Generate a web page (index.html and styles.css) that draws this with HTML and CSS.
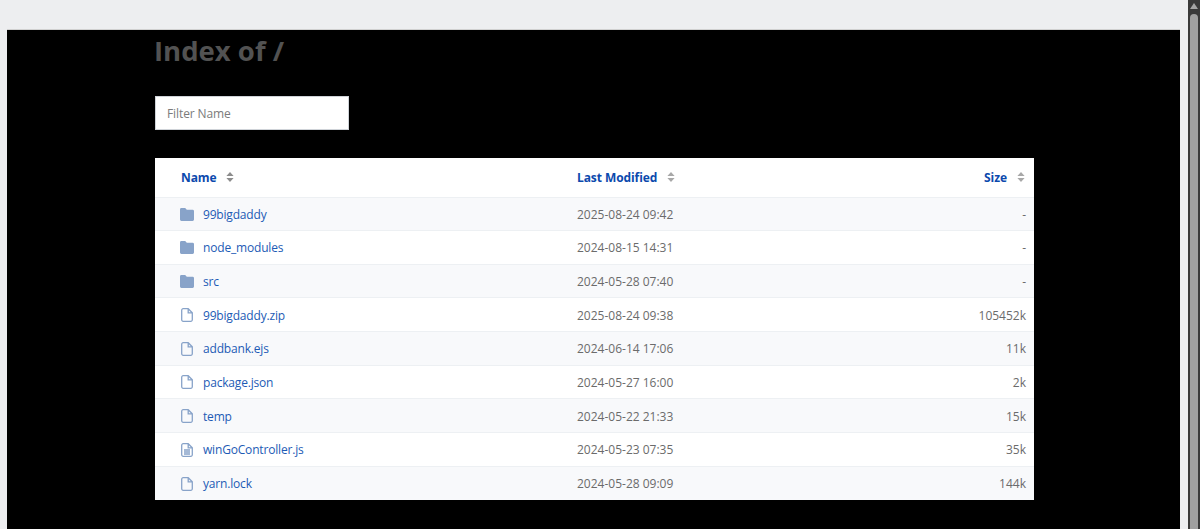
FILE: index.html
```html
<!DOCTYPE html>
<html lang="en">
<head>
<meta charset="utf-8">
<title>Index of /</title>
<link rel="stylesheet" href="styles.css">
</head>
<body>
<svg class="defs" width="0" height="0" aria-hidden="true">
  <symbol id="folder" viewBox="0 0 14 13"><path d="M1.4 0H5.2L6.8 1.8H12.6A1.4 1.4 0 0 1 14 3.2V11.6A1.4 1.4 0 0 1 12.6 13H1.4A1.4 1.4 0 0 1 0 11.6V1.4A1.4 1.4 0 0 1 1.4 0Z"/></symbol>
  <symbol id="file" viewBox="0 0 12 14"><path d="M2.2.7H7.2L11.3 4.8V11.8A1.5 1.5 0 0 1 9.8 13.3H2.2A1.5 1.5 0 0 1 .7 11.8V2.2A1.5 1.5 0 0 1 2.2.7ZM7.2.7V4.8H11.3"/></symbol>
  <symbol id="code" viewBox="0 0 12 14"><path d="M2.2.7H7.2L11.3 4.8V11.8A1.5 1.5 0 0 1 9.8 13.3H2.2A1.5 1.5 0 0 1 .7 11.8V2.2A1.5 1.5 0 0 1 2.2.7ZM7.2.7V4.8H11.3M3 7H9M3 9H9M3 11H9"/></symbol>
  <symbol id="sort" viewBox="0 0 8 10"><path d="M4 0L7.6 4H.4ZM4 10L.4 6H7.6Z"/></symbol>
</svg>
<div class="shell">
  <main class="viewport">
    <div class="content">
      <h1 class="title">Index of /</h1>
      <input class="filter" type="text" placeholder="Filter Name">
      <table class="listing">
        <thead>
          <tr>
            <th class="col-name"><span class="head">Name<svg class="sort"><use href="#sort"/></svg></span></th>
            <th class="col-date"><span class="head">Last Modified<svg class="sort"><use href="#sort"/></svg></span></th>
            <th class="col-size"><span class="head">Size<svg class="sort"><use href="#sort"/></svg></span></th>
          </tr>
        </thead>
        <tbody>
          <tr><td class="col-name"><a class="entry" href="#"><svg class="ico ico-folder"><use href="#folder"/></svg>99bigdaddy</a></td><td class="col-date">2025-08-24 09:42</td><td class="col-size">-</td></tr>
          <tr><td class="col-name"><a class="entry" href="#"><svg class="ico ico-folder"><use href="#folder"/></svg>node_modules</a></td><td class="col-date">2024-08-15 14:31</td><td class="col-size">-</td></tr>
          <tr><td class="col-name"><a class="entry" href="#"><svg class="ico ico-folder"><use href="#folder"/></svg>src</a></td><td class="col-date">2024-05-28 07:40</td><td class="col-size">-</td></tr>
          <tr><td class="col-name"><a class="entry" href="#"><svg class="ico ico-file"><use href="#file"/></svg>99bigdaddy.zip</a></td><td class="col-date">2025-08-24 09:38</td><td class="col-size">105452k</td></tr>
          <tr><td class="col-name"><a class="entry" href="#"><svg class="ico ico-file"><use href="#file"/></svg>addbank.ejs</a></td><td class="col-date">2024-06-14 17:06</td><td class="col-size">11k</td></tr>
          <tr><td class="col-name"><a class="entry" href="#"><svg class="ico ico-file"><use href="#file"/></svg>package.json</a></td><td class="col-date">2024-05-27 16:00</td><td class="col-size">2k</td></tr>
          <tr><td class="col-name"><a class="entry" href="#"><svg class="ico ico-file"><use href="#file"/></svg>temp</a></td><td class="col-date">2024-05-22 21:33</td><td class="col-size">15k</td></tr>
          <tr><td class="col-name"><a class="entry" href="#"><svg class="ico ico-file"><use href="#code"/></svg>winGoController.js</a></td><td class="col-date">2024-05-23 07:35</td><td class="col-size">35k</td></tr>
          <tr><td class="col-name"><a class="entry" href="#"><svg class="ico ico-file"><use href="#file"/></svg>yarn.lock</a></td><td class="col-date">2024-05-28 09:09</td><td class="col-size">144k</td></tr>
        </tbody>
      </table>
    </div>
  </main>
  <div class="scrollbar" aria-hidden="true">
    <div class="scroll-up"></div>
    <div class="scroll-thumb"></div>
  </div>
</div>
</body>
</html>
```
FILE: styles.css
```css
* { box-sizing: border-box; }
html, body { margin: 0; height: 100%; overflow: hidden; }
body { background: #edeef0; font-family: "Open Sans", "Noto Sans", sans-serif; font-size: 12px; color: #6b6b6b; }
.defs { display: block; height: 0; }
.shell { display: flex; height: 529px; }
.viewport { flex: 1; min-width: 0; padding: 29px 8px 0 7px; }
.content { background: #000; height: 100%; border-top: 1px solid #d0d0d0; padding: 0 0 0 148px; }
.title { margin: 0 0 0 -1px; font-size: 27.5px; line-height: 42px; font-weight: 700; color: #525252; height: 66px; }
.filter { display: block; width: 194px; height: 34px; border: 1px solid #cfd3d8; border-radius: 0; background: #fff; padding: 0 11px; font: inherit; letter-spacing: -0.1px; outline: 0; }
.filter::placeholder { color: #7b7b7b; opacity: 1; }
.listing { margin-top: 28px; width: 879px; border-collapse: collapse; background: #fff; table-layout: fixed; }
.listing th { height: 39px; padding: 0; font-weight: 700; color: #0b49ad; letter-spacing: -0.08px; }
.listing td { height: 33.67px; padding: 1px 0 0; border-top: 1px solid #edf0f3; }
.listing tbody tr:nth-child(odd) { background: #f8f9fb; }
.col-name { width: 422px; text-align: left; }
.col-date { width: 300px; text-align: left; }
.col-size { text-align: right; }
.listing th.col-name { padding-left: 26px; }
.listing td.col-name { padding: 3px 0 0 25px; }
.listing td.col-size { padding-right: 8px; }
.listing th.col-size { padding-right: 9px; }
.head { display: inline-flex; align-items: center; }
.sort { width: 8px; height: 10px; margin-left: 10px; fill: #a8a8a8; }
th.col-name .sort { margin-left: 9px; fill: #8d8d8d; }
.entry { display: inline-flex; align-items: center; color: #1d5bb5; text-decoration: none; letter-spacing: -0.18px; }
.ico { flex: none; margin-right: 9px; }
.ico-folder { width: 14px; height: 13px; fill: #88a3c9; }
.ico-file { width: 12px; height: 14px; margin-left: 1px; margin-right: 10px; fill: none; stroke: #88a3c9; stroke-width: 1.3; }
.scrollbar { flex: none; width: 12px; display: flex; flex-direction: column; align-items: center; background: #3a3a3a; padding: 3px 2px 0; }
.scroll-up { flex: none; width: 0; height: 0; border-left: 4px solid transparent; border-right: 4px solid transparent; border-bottom: 6px solid #a5a5a5; }
.scroll-thumb { flex: 1; margin-top: 5px; width: 8px; background: #a0a0a0; border-radius: 4px 4px 0 0; }
```
